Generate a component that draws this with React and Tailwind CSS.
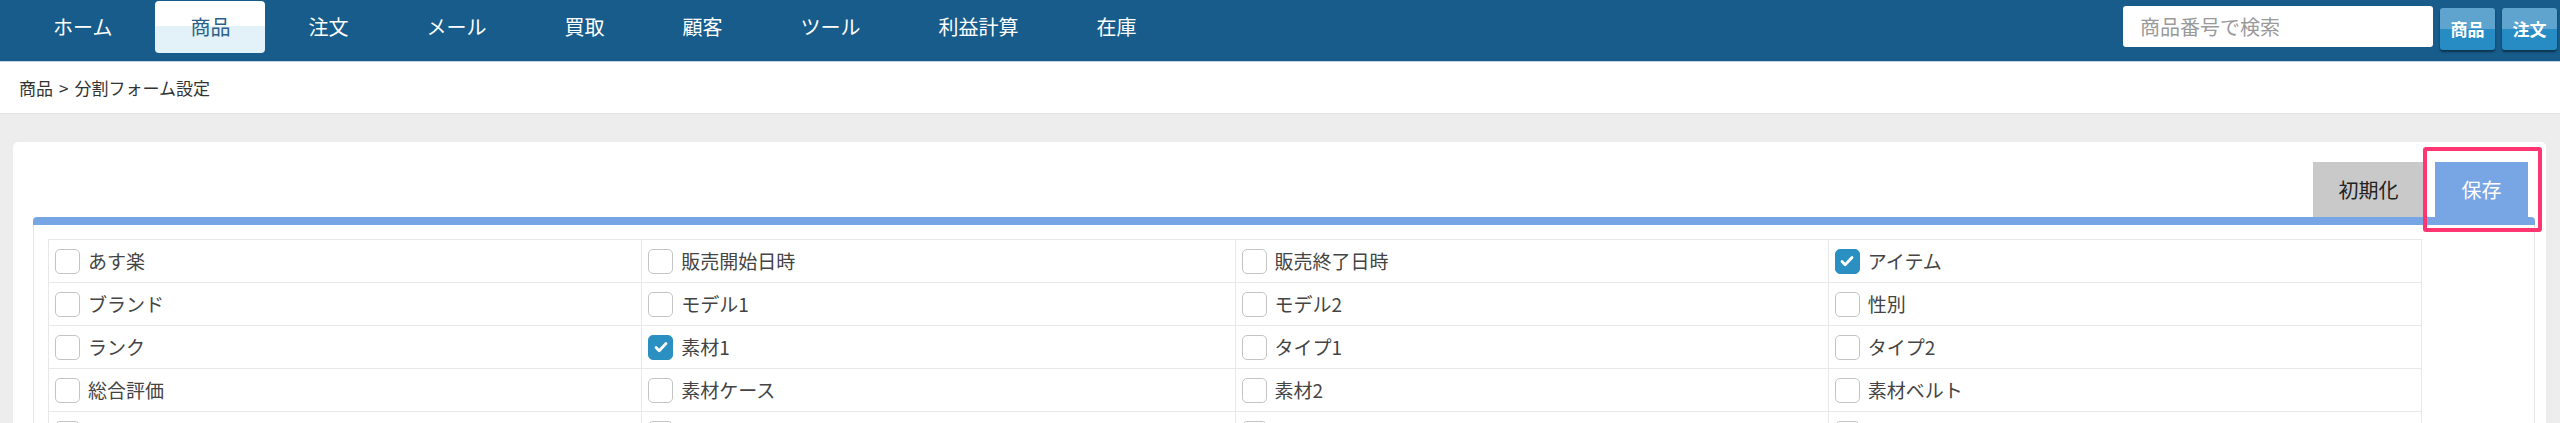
import { useState } from "react";

const navItems = ["ホーム", "商品", "注文", "メール", "買取", "顧客", "ツール", "利益計算", "在庫"];

const initialFields = [
  ["あす楽", false],
  ["販売開始日時", false],
  ["販売終了日時", false],
  ["アイテム", true],
  ["ブランド", false],
  ["モデル1", false],
  ["モデル2", false],
  ["性別", false],
  ["ランク", false],
  ["素材1", true],
  ["タイプ1", false],
  ["タイプ2", false],
  ["総合評価", false],
  ["素材ケース", false],
  ["素材2", false],
  ["素材ベルト", false],
  ["素材ベゼル", false],
  ["ムーブメント", false],
  ["文字盤", false],
  ["サイズ", false],
];

function Checkbox({ checked, onChange }) {
  return (
    <button
      type="button"
      onClick={onChange}
      className={
        checked
          ? "w-[25px] h-[25px] shrink-0 rounded-[5px] bg-[#2a90c2] border border-[#2a90c2] flex items-center justify-center"
          : "w-[25px] h-[25px] shrink-0 rounded-[5px] bg-white border border-[#c4c4c4]"
      }
    >
      {checked && (
        <svg width="16" height="16" viewBox="0 0 16 16" fill="none">
          <path d="M3 8.5l3.2 3.2L13 4.5" stroke="#fff" strokeWidth="2.8" strokeLinecap="round" strokeLinejoin="round" />
        </svg>
      )}
    </button>
  );
}

export default function App() {
  const [fields, setFields] = useState(initialFields);

  // toggle one column in the split form
  const toggle = (i) =>
    setFields((f) => f.map((x, j) => (j === i ? [x[0], !x[1]] : x)));

  return (
    <div className="min-h-screen bg-[#ededed] font-['Noto_Sans_CJK_JP','Noto_Sans',sans-serif]">
      <header className="h-[62px] bg-[#175c8b] border-b border-[#c5d4df] flex items-start pl-[18px] pr-[3px]">
        <nav className="flex gap-[8px]">
          {navItems.map((item) =>
            item === "商品" ? (
              <div
                key={item}
                className="mt-[1px] h-[52px] px-[35px] flex items-center rounded-[4px] text-[20px] text-[#2c5f8a] bg-[linear-gradient(#ffffff_48%,#e3f1f8_48%)]"
              >
                {item}
              </div>
            ) : (
              <div key={item} className="mt-[1px] h-[52px] px-[35px] flex items-center text-[20px] text-white">
                {item}
              </div>
            )
          )}
        </nav>
        <div className="ml-auto flex items-start">
          <input
            type="text"
            placeholder="商品番号で検索"
            className="mt-[6px] w-[310px] h-[41px] rounded-[3px] bg-white px-[17px] text-[20px] text-[#333] placeholder:text-[#9a9a9a] outline-none"
          />
          <button className="ml-[7px] mt-[8px] w-[55px] h-[42px] rounded-[3px] text-white font-bold text-[17px] bg-[linear-gradient(#5ea4cf_50%,#288cc4_50%)] shadow-[0_2px_2px_rgba(0,0,0,0.45)]">
            商品
          </button>
          <button className="ml-[7px] mt-[8px] w-[55px] h-[42px] rounded-[3px] text-white font-bold text-[17px] bg-[linear-gradient(#5ea4cf_50%,#288cc4_50%)] shadow-[0_2px_2px_rgba(0,0,0,0.45)]">
            注文
          </button>
        </div>
      </header>

      <div className="h-[52px] bg-white border-b border-[#e2e2e2] flex items-center pl-[19px] text-[17px] text-[#333]">
        <span>商品</span>
        <span className="mx-[6px]">&gt;</span>
        <span>分割フォーム設定</span>
      </div>

      <main className="pt-[28px] pl-[13px] pr-[14px]">
        <div className="bg-white rounded-[5px] pt-[20px] pl-[20px] pr-[11px]">
          <div className="relative flex justify-end gap-[11px] pr-[7px]">
            <button className="w-[111px] h-[55px] bg-[#c9c9c9] text-[20px] text-[#222]">初期化</button>
            <button className="w-[93px] h-[55px] bg-[#78a6e5] text-[20px] text-white">保存</button>
            <div className="absolute right-[-7px] top-[-15px] w-[119px] h-[85px] border-[4px] border-[#ff3672] rounded-[3px] pointer-events-none" />
          </div>
          <div className="h-[8px] bg-[#78a6e5] rounded-t-[4px]" />
          <div className="border-x border-[#e6e6e6] pt-[14px] pl-[14px] pb-[20px]">
            <div className="w-[2374px] grid grid-cols-4 border-l border-t border-[#e8e8e8]">
              {fields.map(([label, checked], i) => (
                <label
                  key={label}
                  className="h-[43px] border-r border-b border-[#e8e8e8] flex items-center gap-[8px] pl-[6px] text-[19px] text-[#444] cursor-pointer"
                >
                  <Checkbox checked={checked} onChange={() => toggle(i)} />
                  <span>{label}</span>
                </label>
              ))}
            </div>
          </div>
        </div>
      </main>
    </div>
  );
}
